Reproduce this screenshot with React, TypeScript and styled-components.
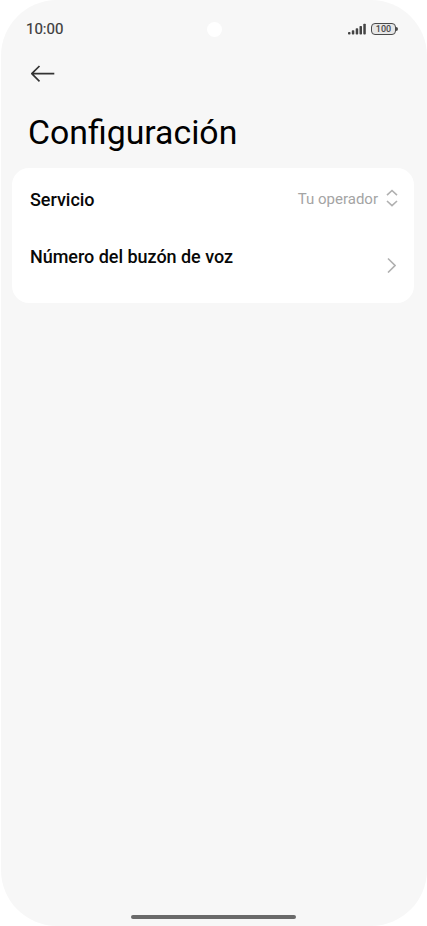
import React from 'react';
import styled, { createGlobalStyle } from 'styled-components';

const GlobalStyle = createGlobalStyle`
  * { box-sizing: border-box; }
  body { margin: 0; background: #fff; font-family: Roboto, sans-serif; }
`;

const Screen = styled.main`
  display: flex;
  flex-direction: column;
  width: 426px;
  height: 926px;
  margin-left: 1px;
  background: #f7f7f7;
  border-radius: 56px;
  overflow: hidden;
`;

const StatusBar = styled.header`
  display: grid;
  grid-template-columns: 1fr 15px 1fr;
  align-items: center;
  height: 58px;
  padding: 0 28px 0 25px;
`;

const Clock = styled.time`
  font-size: 15px;
  line-height: 18px;
  color: #3a3a3a;
  -webkit-text-stroke: 0.2px #3a3a3a;
`;

const Camera = styled.span`
  width: 15px;
  height: 15px;
  margin: 1px 0 0 2px;
  border-radius: 50%;
  background: #fff;
`;

const StatusIcons = styled.div`
  display: flex;
  justify-content: flex-end;
  align-items: center;
  gap: 5px;
  padding: 0 1px 1px 0;
`;

const Battery = styled.div`
  display: flex;
  align-items: center;
`;

const BatteryCase = styled.span`
  display: flex;
  align-items: center;
  justify-content: center;
  width: 25px;
  height: 12px;
  border: 1.5px solid #4a4a4a;
  border-radius: 4px;
  background: #e6e6e6;
  color: #4a4a4a;
  font-size: 9px;
  font-weight: 500;
  line-height: 10px;
`;

const BatteryTip = styled.span`
  width: 2px;
  height: 4px;
  border-radius: 0 2px 2px 0;
  background: #4a4a4a;
`;

const NavBar = styled.nav`
  display: flex;
  align-items: center;
  height: 32px;
  padding-left: 29px;
`;

const BackButton = styled.button`
  display: flex;
  padding: 0;
  border: 0;
  background: none;
  color: #333;
`;

const Title = styled.h1`
  margin: 23px 0 15px 27px;
  font-size: 33.8px;
  font-weight: 400;
  line-height: 40px;
  color: #000;
`;

const Card = styled.section`
  display: flex;
  flex-direction: column;
  width: 402px;
  height: 135px;
  margin-left: 11px;
  border-radius: 17px;
  background: #fff;
`;

const Row = styled.div<{ $height: number }>`
  display: flex;
  justify-content: space-between;
  height: ${({ $height }) => $height}px;
  padding: 20px 16px 0 18px;
`;

const Label = styled.span`
  padding-top: 1px;
  font-size: 18px;
  font-weight: 500;
  line-height: 22px;
  letter-spacing: -0.03px;
  color: #080808;
`;

const Value = styled.span`
  display: flex;
  gap: 8px;
  font-size: 15px;
  line-height: 22px;
  color: #a4a4a4;
`;

const Chevron = styled.span`
  display: flex;
  padding: 12px 2px 0 0;
  color: #b0b0b0;
`;

const HomeIndicator = styled.div`
  width: 165px;
  height: 4px;
  margin: auto 0 7px 130px;
  border-radius: 2px;
  background: #6a6a6a;
`;

const SignalIcon = () => (
  <svg width="18" height="12" viewBox="0 0 18 12" fill="#444">
    <rect x="0" y="9" width="2.5" height="2.5" rx="0.8" />
    <rect x="3.8" y="7.2" width="2.5" height="4.3" rx="0.8" />
    <rect x="7.7" y="5.2" width="2.5" height="6.3" rx="0.8" />
    <rect x="11.5" y="3" width="2.5" height="8.5" rx="0.8" />
    <rect x="15.3" y="0.7" width="2.5" height="10.8" rx="0.8" />
  </svg>
);

const BackIcon = () => (
  <svg width="26" height="18" viewBox="0 0 26 18" fill="none" stroke="currentColor" strokeWidth="1.7">
    <path d="M24.3 8.7H2M9.5 1L1.8 8.7L9.5 16.4" strokeLinejoin="round" />
  </svg>
);

const SelectIcon = () => (
  <svg width="12" height="20" viewBox="0 0 12 20" fill="none" stroke="#b0b0b0" strokeWidth="1.6">
    <path d="M1 7.2L6 2.5L11 7.2M1 13L6 17.7L11 13" />
  </svg>
);

const ChevronIcon = () => (
  <svg width="9" height="16" viewBox="0 0 9 16" fill="none" stroke="currentColor" strokeWidth="1.6">
    <path d="M1 1.5L8 8.5L1 15.5" />
  </svg>
);

export default function App() {
  return (
    <>
      <GlobalStyle />
      <Screen>
        <StatusBar>
          <Clock>10:00</Clock>
          <Camera />
          <StatusIcons>
            <SignalIcon />
            <Battery>
              <BatteryCase>100</BatteryCase>
              <BatteryTip />
            </Battery>
          </StatusIcons>
        </StatusBar>
        <NavBar>
          <BackButton aria-label="Atrás"><BackIcon /></BackButton>
        </NavBar>
        <Title>Configuración</Title>
        <Card>
          <Row $height={57}>
            <Label>Servicio</Label>
            <Value>Tu operador<SelectIcon /></Value>
          </Row>
          <Row $height={78}>
            <Label>Número del buzón de voz</Label>
            <Chevron><ChevronIcon /></Chevron>
          </Row>
        </Card>
        <HomeIndicator />
      </Screen>
    </>
  );
}
